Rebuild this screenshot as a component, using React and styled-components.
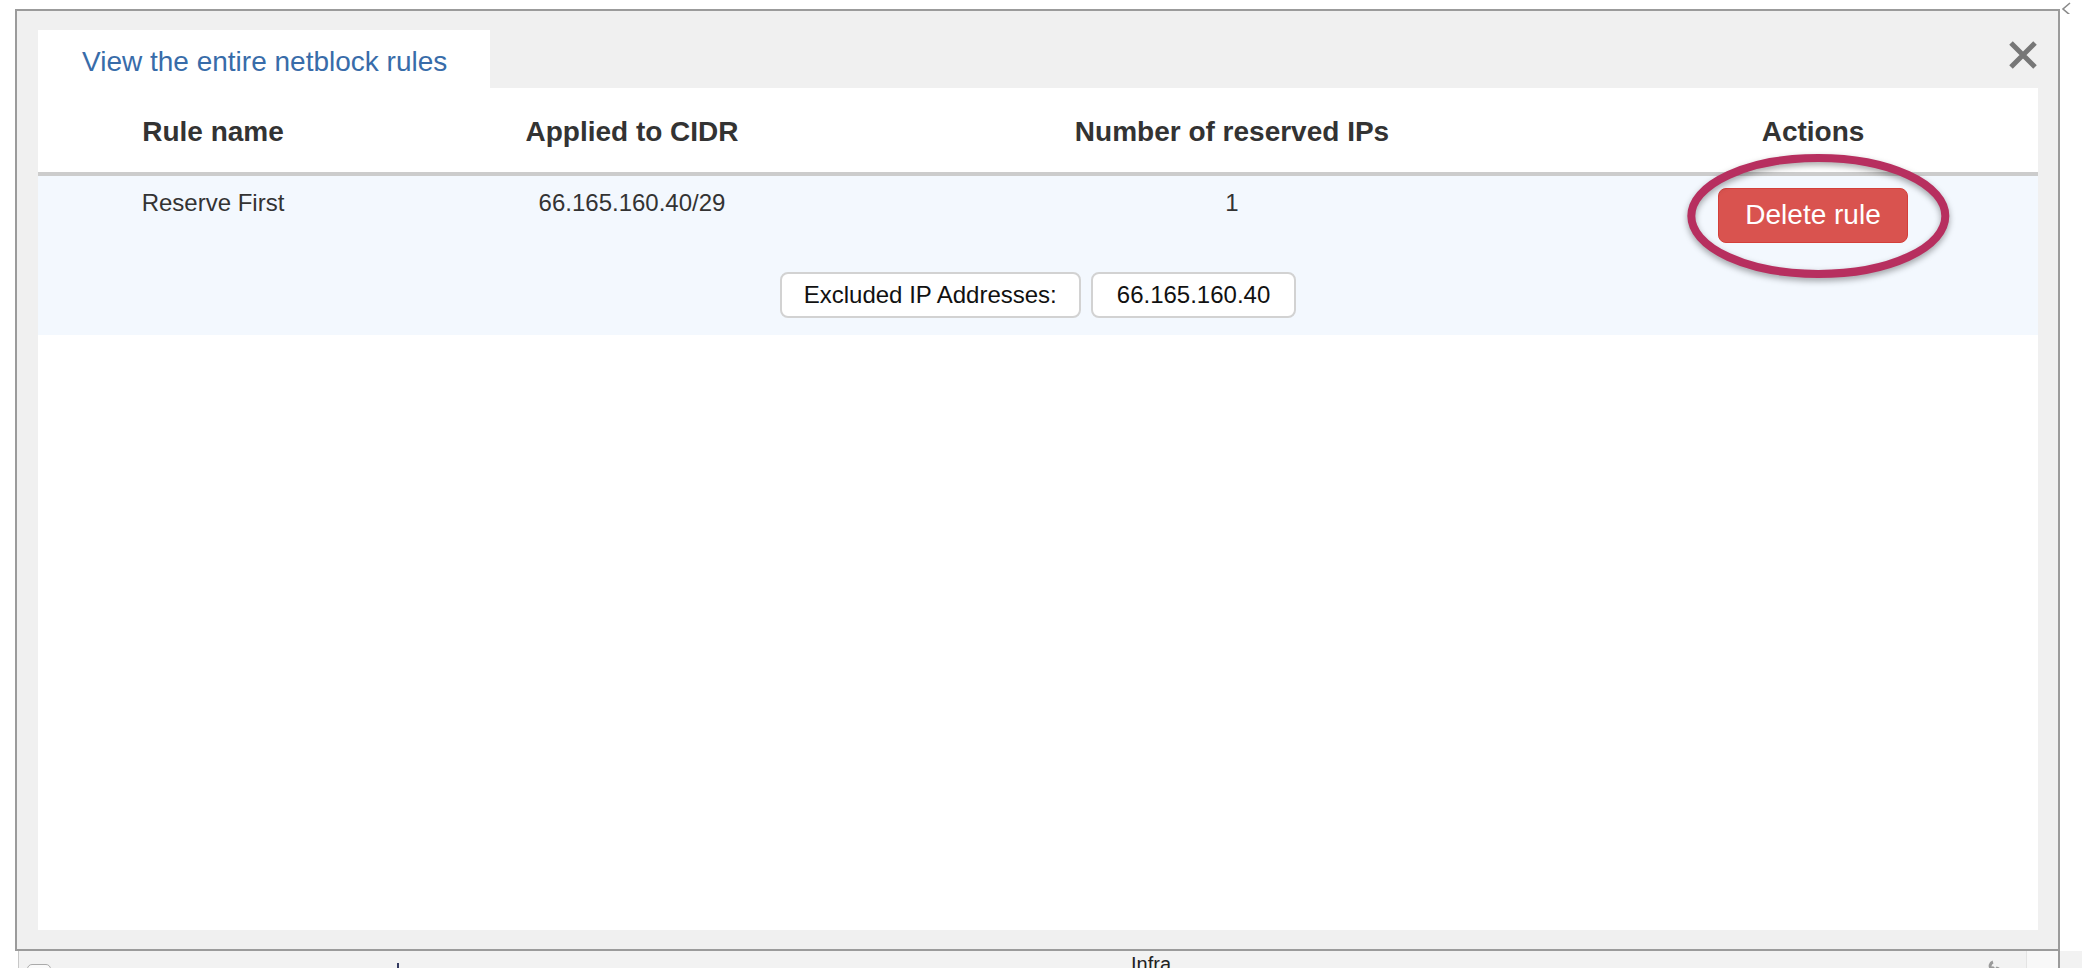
import React from 'react';
import styled, { createGlobalStyle } from 'styled-components';

const GlobalStyle = createGlobalStyle`
    html, body {
        margin: 0;
        padding: 0;
        background: #ffffff;
        overflow: hidden;
    }
    body {
        font-family: 'Liberation Sans', Arial, Helvetica, sans-serif;
        color: #333333;
    }
`;

const Page = styled.div`
    position: relative;
    width: 2082px;
    height: 968px;
    padding-top: 9px;
    box-sizing: border-box;
`;

const Dialog = styled.div`
    margin-left: 15px;
    width: 2045px;
    box-sizing: border-box;
    border: 2px solid #9b9b9b;
    background: #f0f0f0;
    padding: 19px 20px 19px 21px;
`;

const TabBar = styled.div`
    display: flex;
    justify-content: space-between;
    align-items: flex-start;
    height: 58px;
`;

const Tab = styled.div`
    background: #ffffff;
    height: 58px;
    box-sizing: border-box;
    padding: 12px 43px 0 44px;
    font-size: 28px;
    line-height: 40px;
    color: #386ca9;
`;

const CloseButton = styled.button`
    border: 0;
    background: transparent;
    padding: 0;
    margin-top: 10px;
    width: 30px;
    height: 30px;
    cursor: pointer;
    display: block;
`;

const Content = styled.div`
    background: #ffffff;
    height: 842px;
`;

const HeaderRow = styled.div`
    display: grid;
    grid-template-columns: 350px 488px 712px 1fr;
    padding: 24px 0 20px;
    border-bottom: 4px solid #cccccc;
`;

const HeadCell = styled.div`
    font-size: 28px;
    font-weight: 700;
    line-height: 40px;
    text-align: center;
    color: #333333;
`;

const RuleRow = styled.div`
    background: #f3f8fe;
    padding: 10px 0 17px;
`;

const Cells = styled.div`
    display: grid;
    grid-template-columns: 350px 488px 712px 1fr;
    align-items: start;
`;

const Cell = styled.div`
    font-size: 24px;
    line-height: 34px;
    text-align: center;
    color: #333333;
`;

const ActionCell = styled.div`
    display: flex;
    justify-content: center;
    margin-top: 2px;
`;

const Highlight = styled.div`
    position: relative;
    display: inline-block;
`;

const Ring = styled.svg`
    position: absolute;
    left: 50%;
    top: 50%;
    width: 266px;
    height: 128px;
    transform: translate(-48%, -50%);
    overflow: visible;
    pointer-events: none;
    filter: drop-shadow(0 3px 3px rgba(0, 0, 0, 0.35));
`;

const DeleteButton = styled.button`
    font-family: inherit;
    font-size: 28px;
    line-height: 34px;
    color: #ffffff;
    background: #d9534f;
    border: 1px solid #d43f3a;
    border-radius: 8px;
    padding: 9px 26px 10px;
    cursor: pointer;
`;

const Excluded = styled.div`
    display: flex;
    justify-content: center;
    gap: 10px;
    margin-top: 29px;
`;

const Chip = styled.div`
    font-size: 24px;
    line-height: 42px;
    color: #111111;
    background: #ffffff;
    border: 2px solid #d2d2d2;
    border-radius: 8px;
    padding: 0 ${(p) => p.$pad}px;
`;

const Footer = styled.div`
    position: relative;
    margin-left: 18px;
    height: 17px;
    background: #f2f2f2;
    border-left: 1px solid #c8c8c8;
    overflow: hidden;
`;

const FooterCheck = styled.div`
    position: absolute;
    left: 8px;
    top: 13px;
    width: 22px;
    height: 20px;
    border: 1px solid #aaaaaa;
    border-radius: 5px;
    background: #fafafa;
`;

const FooterTick = styled.div`
    position: absolute;
    left: 378px;
    top: 12px;
    width: 2px;
    height: 6px;
    background: #333a60;
`;

const FooterLabel = styled.div`
    position: absolute;
    left: 1112px;
    top: 3px;
    font-size: 20px;
    line-height: 20px;
    color: #222222;
`;

const FooterSide = styled.div`
    position: absolute;
    right: 22px;
    top: 0;
    width: 31px;
    height: 17px;
    background: #f8f8f8;
    border-left: 1px solid #e4e4e4;
    border-right: 2px solid #9b9b9b;
`;

const FooterIcon = styled.svg`
    position: absolute;
    left: 1966px;
    top: 8px;
    width: 16px;
    height: 16px;
`;

const EdgeMark = styled.svg`
    position: absolute;
    left: 2061px;
    top: 2px;
    width: 10px;
    height: 12px;
`;

const rules = [
    {
        name: 'Reserve First',
        cidr: '66.165.160.40/29',
        reserved: 1,
        excluded: ['66.165.160.40'],
    },
];

function App() {
    return (
        <>
            <GlobalStyle />
            <Page>
                <EdgeMark viewBox="0 0 10 12">
                    <path d="M9 1 L2 7 L9 13" stroke="#8a8a8a" strokeWidth="1.6" fill="none" />
                </EdgeMark>
                <Dialog>
                    <TabBar>
                        <Tab>View the entire netblock rules</Tab>
                        <CloseButton title="close">
                            <svg width="30" height="30" viewBox="0 0 30 30">
                                <path
                                    d="M3 3 L27 27 M27 3 L3 27"
                                    stroke="#777777"
                                    strokeWidth="5"
                                    strokeLinecap="butt"
                                />
                            </svg>
                        </CloseButton>
                    </TabBar>
                    <Content>
                        <HeaderRow>
                            <HeadCell>Rule name</HeadCell>
                            <HeadCell>Applied to CIDR</HeadCell>
                            <HeadCell>Number of reserved IPs</HeadCell>
                            <HeadCell>Actions</HeadCell>
                        </HeaderRow>
                        {rules.map((rule) => (
                            <RuleRow key={rule.name}>
                                <Cells>
                                    <Cell>{rule.name}</Cell>
                                    <Cell>{rule.cidr}</Cell>
                                    <Cell>{rule.reserved}</Cell>
                                    <ActionCell>
                                        <Highlight>
                                            <DeleteButton>Delete rule</DeleteButton>
                                            <Ring viewBox="0 0 266 128">
                                                <ellipse
                                                    cx="133"
                                                    cy="64"
                                                    rx="127"
                                                    ry="58"
                                                    fill="none"
                                                    stroke="#b72f5f"
                                                    strokeWidth="8"
                                                />
                                            </Ring>
                                        </Highlight>
                                    </ActionCell>
                                </Cells>
                                <Excluded>
                                    <Chip $pad={22}>Excluded IP Addresses:</Chip>
                                    {rule.excluded.map((ip) => (
                                        <Chip key={ip} $pad={24}>
                                            {ip}
                                        </Chip>
                                    ))}
                                </Excluded>
                            </RuleRow>
                        ))}
                    </Content>
                </Dialog>
                <Footer>
                    <FooterCheck />
                    <FooterTick />
                    <FooterLabel>Infra</FooterLabel>
                    <FooterIcon viewBox="0 0 16 16">
                        <path d="M3 14 L9 8 M8 3 A4 4 0 1 0 13 8" stroke="#9a9a9a" strokeWidth="3" fill="none" />
                    </FooterIcon>
                    <FooterSide />
                </Footer>
            </Page>
        </>
    );
}

export default App;
